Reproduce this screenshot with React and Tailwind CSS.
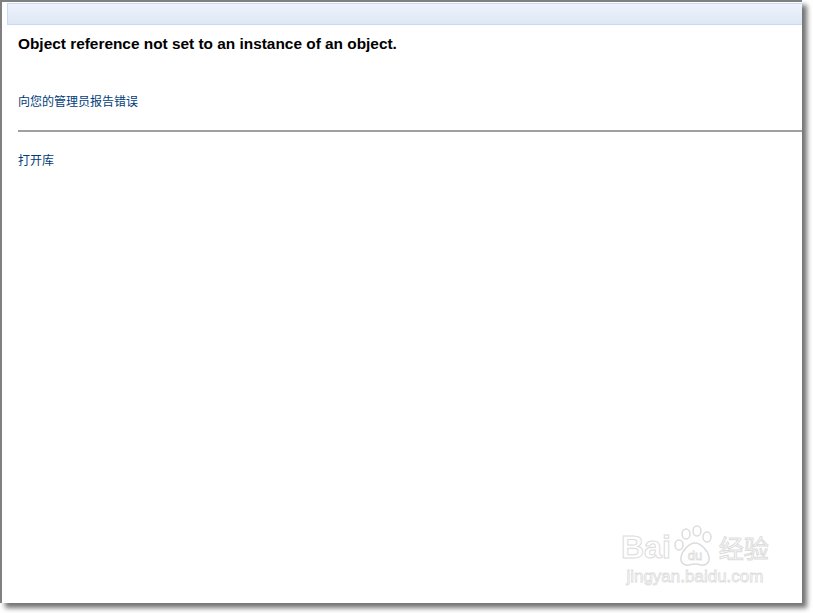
export default function App() {
  return (
    <div className="w-[813px] h-[613px] bg-white font-['Liberation_Sans',Arial,sans-serif]">
      {/* FRAME */}
      <div className="relative w-[802px] h-[603px] bg-white border-t-2 border-l-2 border-[#808080] shadow-[5px_5px_5px_rgba(0,0,0,0.55)]">
        {/* TITLE BAR */}
        <div className="ml-[5px] mt-[1px] h-[22px] border border-r-0 border-[#c9daf2] bg-gradient-to-b from-[#eef3fb] to-[#dde7f5]" />

        {/* CONTENT */}
        <div className="pl-4">
          <h1 className="mt-[10px] text-[15.4px] leading-[18px] font-bold text-black">
            Object reference not set to an instance of an object.
          </h1>

          <a className="block mt-[40px] text-[12px] leading-[16px] text-[#003d79] font-['Noto_Sans_CJK_SC',sans-serif]">
            向您的管理员报告错误
          </a>

          <hr className="mt-[21px] border-0 h-[2px] bg-[#a0a0a0]" />

          <a className="block mt-[20px] text-[12px] leading-[16px] text-[#003d79] font-['Noto_Sans_CJK_SC',sans-serif]">
            打开库
          </a>
        </div>

        {/* WATERMARK */}
        <div className="absolute left-[619px] top-[522px] flex flex-col items-center text-white">
          <div className="flex items-center gap-[1px]">
            <span className="text-[32px] leading-[34px] font-bold [-webkit-text-stroke:1px_#dcdcdc]">Bai</span>
            <svg width="46" height="46" viewBox="0 0 46 46" fill="none" stroke="#dcdcdc" strokeWidth="1.5">
              <ellipse cx="14" cy="10" rx="4" ry="5" />
              <ellipse cx="25" cy="7" rx="4" ry="5" />
              <ellipse cx="35" cy="13" rx="4" ry="5" />
              <ellipse cx="7" cy="21" rx="4" ry="5" />
              <path d="M23 19c-6 0-13 8-14 14-1 6 4 9 8 8 3-1 4-1 6-1s3 0 6 1c4 1 9-2 8-8-1-6-8-14-14-14z" />
              <text x="23" y="36" textAnchor="middle" fontSize="13" fontFamily="Liberation Sans, Arial, sans-serif" fill="white" stroke="#dcdcdc" strokeWidth="0.8">du</text>
            </svg>
            <span className="text-[25px] leading-[34px] font-['Noto_Sans_CJK_SC',sans-serif] [-webkit-text-stroke:1px_#dcdcdc]">经验</span>
          </div>
          <span className="-mt-[3px] text-[17px] leading-[20px] [-webkit-text-stroke:0.8px_#dcdcdc]">jingyan.baidu.com</span>
        </div>
      </div>
    </div>
  );
}
